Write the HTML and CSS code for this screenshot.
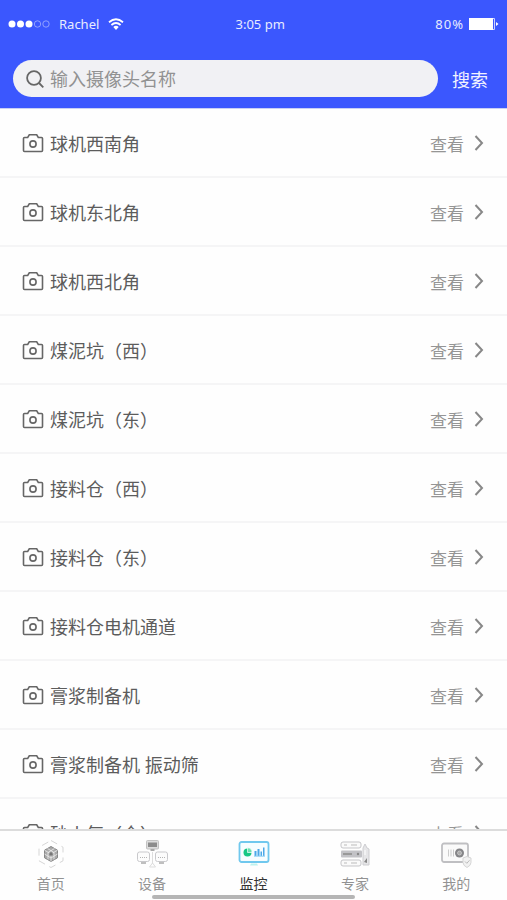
FILE: index.html
```html
<!DOCTYPE html>
<html lang="zh-CN">
<head>
<meta charset="utf-8">
<meta name="viewport" content="width=device-width, initial-scale=1">
<title>监控</title>
<link rel="stylesheet" href="styles.css">
</head>
<body>
<svg class="defs" aria-hidden="true">
  <symbol id="camera" viewBox="0 0 22 20"><path d="M2.5 4.500h3.200l1.600-2.700h7.400l1.600 2.700h3.200q1 0 1 1v12q0 1-1 1h-17q-1 0-1-1v-12q0-1 1-1z"/><circle cx="11" cy="11" r="3.100"/></symbol>
  <symbol id="chevron" viewBox="0 0 10 18"><path d="M1.500 2l6.500 7-6.500 7"/></symbol>
</svg>
<header class="header">
  <div class="status">
    <div class="carrier">
      <svg width="42" height="10" viewBox="0 0 42 10"><g fill="#fff"><circle cx="4" cy="5" r="3.500"/><circle cx="12.500" cy="5" r="3.500"/><circle cx="21" cy="5" r="3.500"/></g><g fill="none" stroke="#a5b1ff" stroke-width=".8"><circle cx="29.500" cy="5" r="3.200"/><circle cx="38" cy="5" r="3.200"/></g></svg>
      <span>Rachel</span>
      <svg width="16" height="12" viewBox="0 0 16 12"><g fill="none" stroke="#fff" stroke-width="1.800"><path d="M1 4.300q7-6 14 0"/><path d="M3.400 7q4.600-4 9.200 0"/></g><path d="M5.300 9q2.700-2.300 5.400 0L8 12z" fill="#fff"/></svg>
    </div>
    <time>3:05 pm</time>
    <div class="battery">
      <span>80%</span>
      <svg width="31" height="12" viewBox="0 0 31 12"><path d="M1 0h24v12H1z" fill="#fff"/><path d="M25 .5h1.500v11H25" fill="none" stroke="#cbd1ff"/><path d="M28 4l2.500 2L28 8z" fill="#fff"/></svg>
    </div>
  </div>
  <form class="search">
    <label class="field">
      <svg width="18" height="18" viewBox="0 0 18 18" fill="none" stroke="#666" stroke-width="1.800"><circle cx="8" cy="8" r="6.900"/><path d="M13 13l4.300 4.300"/></svg>
      <input type="text" placeholder="输入摄像头名称" aria-label="输入摄像头名称">
    </label>
    <button type="button">搜索</button>
  </form>
</header>
<main class="list">
  <ul>
    <li><svg class="camera"><use href="#camera"/></svg><span>球机西南角</span><a href="#">查看<svg class="chevron"><use href="#chevron"/></svg></a></li>
    <li><svg class="camera"><use href="#camera"/></svg><span>球机东北角</span><a href="#">查看<svg class="chevron"><use href="#chevron"/></svg></a></li>
    <li><svg class="camera"><use href="#camera"/></svg><span>球机西北角</span><a href="#">查看<svg class="chevron"><use href="#chevron"/></svg></a></li>
    <li><svg class="camera"><use href="#camera"/></svg><span>煤泥坑（西）</span><a href="#">查看<svg class="chevron"><use href="#chevron"/></svg></a></li>
    <li><svg class="camera"><use href="#camera"/></svg><span>煤泥坑（东）</span><a href="#">查看<svg class="chevron"><use href="#chevron"/></svg></a></li>
    <li><svg class="camera"><use href="#camera"/></svg><span>接料仓（西）</span><a href="#">查看<svg class="chevron"><use href="#chevron"/></svg></a></li>
    <li><svg class="camera"><use href="#camera"/></svg><span>接料仓（东）</span><a href="#">查看<svg class="chevron"><use href="#chevron"/></svg></a></li>
    <li><svg class="camera"><use href="#camera"/></svg><span>接料仓电机通道</span><a href="#">查看<svg class="chevron"><use href="#chevron"/></svg></a></li>
    <li><svg class="camera"><use href="#camera"/></svg><span>膏浆制备机</span><a href="#">查看<svg class="chevron"><use href="#chevron"/></svg></a></li>
    <li><svg class="camera"><use href="#camera"/></svg><span>膏浆制备机 振动筛</span><a href="#">查看<svg class="chevron"><use href="#chevron"/></svg></a></li>
    <li><svg class="camera"><use href="#camera"/></svg><span>砂火每（仓）</span><a href="#">查看<svg class="chevron"><use href="#chevron"/></svg></a></li>
  </ul>
</main>
<nav class="tabs">
  <a href="#">
    <svg viewBox="0 0 34 30" fill="none"><path d="M17 1.500l12 6.700v13.600l-12 6.700-12-6.700V8.200z" stroke="#d6d6d6" stroke-dasharray="7 5"/><path d="M17 7.500l6.500 3.700v7.600L17 22.500l-6.500-3.700v-7.600z" fill="#aaa" stroke="#858585" stroke-linejoin="round"/><path d="M10.500 11.200L17 15l6.500-3.800M17 15v7.500M13.500 9.500l6.500 4v7M20.500 9.500l-6.500 4v7M10.500 15l6.500 4 6.500-4" stroke="#ececec" stroke-width=".8"/><circle cx="17" cy="15" r="1.800" fill="#777"/></svg>
    <span>首页</span>
  </a>
  <a href="#">
    <svg viewBox="0 0 34 30" fill="none"><rect x="11.500" y="1.500" width="12" height="8.500" rx="1" fill="#ddd" stroke="#c2c2c2"/><path d="M13 3.500h9v4.500h-9z" fill="#8c8c8c"/><path d="M15.500 11h4" stroke="#aaa" stroke-width="2"/><g fill="#fcfcfc" stroke="#c9c9cc"><rect x="2.500" y="13" width="12" height="9.500" rx="2"/><rect x="20.500" y="13" width="12" height="9.500" rx="2"/></g><path d="M5 18.500h7M23 18.500h7" stroke="#b5b5b5" stroke-dasharray="1 1"/><path d="M6 24h5M24 24h5" stroke="#aaa" stroke-width="1.500"/><path d="M17.500 13v12M14.500 28l3-4 3 4z" stroke="#ddd"/></svg>
    <span>设备</span>
  </a>
  <a href="#" class="active" aria-current="page">
    <svg viewBox="0 0 34 30" fill="none"><rect x="2.500" y="3" width="29" height="20" rx="2" fill="#f6fdff" stroke="#70c8ee" stroke-width="1.800"/><path d="M14 24.500h6l1 2h-8z" fill="#bdf2ee"/><circle cx="10.500" cy="13.500" r="4" fill="#16c784"/><path d="M10.500 13.500V8.800q4.500.2 4.500 4.700z" fill="#6be0b0" stroke="#f6fdff" stroke-width=".7"/><path d="M17.500 12h2v5h-2zM20.500 10h2v7h-2zM23.500 12.500h1.500V17h-1.500zM26 8.500h1.500V17H26z" fill="#4ba8e8"/><path d="M17 17.200h11" stroke="#8fd0f4"/></svg>
    <span>监控</span>
  </a>
  <a href="#">
    <svg viewBox="0 0 34 30" fill="none"><g fill="#fafafa" stroke="#c5c5c8"><rect x="3" y="3" width="20" height="6" rx="2"/><rect x="3" y="21" width="20" height="6" rx="2"/></g><rect x="3" y="11.500" width="21" height="7" rx="1" fill="#c2c2c6"/><path d="M5 15h9" stroke="#999" stroke-width="2"/><circle cx="20" cy="15" r="1.200" fill="#888"/><path d="M13 6h6M13 24h6M6 6h3M6 24h3" stroke="#bbb"/><path d="M25 26V9l2-4 2 4 2 1v16z" fill="#e6e6e8" stroke="#cdcdd0"/><path d="M26 23l3-4v5z" fill="#888"/><path d="M27 11v5" stroke="#fff"/></svg>
    <span>专家</span>
  </a>
  <a href="#">
    <svg viewBox="0 0 34 30" fill="none"><rect x="3" y="4.500" width="26" height="18.500" rx="2" fill="#fafafa" stroke="#bfbfc2" stroke-width="1.800"/><path d="M9.500 10.500v7M12 10.500v7M14.500 10.500v7" stroke="#ccc"/><circle cx="20.500" cy="14" r="4.500" fill="#858588"/><circle cx="20.500" cy="14" r="2" fill="#aaa" stroke="#ddd" stroke-width=".6"/><path d="M28 17.500l4 1.500v4.500q0 3-4 5-4-2-4-5V19z" fill="#f1f1f1" stroke="#d5d5d5"/><path d="M26 22.500l1.800 1.800 2.700-3" stroke="#bbb"/></svg>
    <span>我的</span>
  </a>
  <div class="home-indicator"></div>
</nav>
</body>
</html>
```
FILE: styles.css
```css
* {
  box-sizing: border-box;
}

body {
  display: flex;
  flex-direction: column;
  height: 100vh;
  margin: 0;
  background: #fefefe;
  color: #5c5c5c;
  font-family: "Noto Sans", "Noto Sans CJK SC", sans-serif;
}

svg {
  flex: none;
}

a {
  color: inherit;
  text-decoration: none;
}

.defs {
  position: absolute;
  width: 0;
  height: 0;
}

.header {
  flex: none;
  padding-bottom: 11px;
  border-bottom: 1px solid #c9d0f4;
  background: #3b57fe;
  background-clip: padding-box;
  color: #fff;
}

.status {
  display: grid;
  grid-template-columns: 17fr auto 16fr;
  align-items: center;
  height: 60px;
  padding: 0 8px 12px;
  color: #e8ebff;
  font-size: 13px;
}

.carrier,
.battery {
  display: flex;
  align-items: center;
  gap: 9px;
}

.battery {
  justify-content: flex-end;
  gap: 4px;
  letter-spacing: 1px;
}

.search {
  display: flex;
  align-items: center;
  gap: 14px;
  margin: 0;
  padding: 0 19px 0 13px;
}

.field {
  display: flex;
  flex: 1;
  align-items: center;
  gap: 6px;
  height: 37px;
  min-width: 0;
  padding: 0 13px;
  border-radius: 19px;
  background: #f1f1f4;
}

.field input {
  flex: 1;
  min-width: 0;
  padding: 0;
  border: 0;
  outline: 0;
  background: transparent;
  color: #555;
  font: inherit;
  font-size: 18px;
}

.field input::placeholder {
  color: #929292;
  opacity: 1;
}

.search button {
  padding: 0;
  border: 0;
  background: none;
  color: #f1f3ff;
  font: inherit;
  font-size: 18px;
}

.list {
  flex: 1;
  min-height: 0;
  overflow: hidden;
}

.list ul {
  margin: 0;
  padding: 0;
  list-style: none;
}

.list li {
  display: flex;
  align-items: center;
  gap: 6px;
  height: 69px;
  padding: 1px 23px 0 22px;
  border-bottom: 2px solid #f5f5f6;
  font-size: 18px;
}

.list span {
  flex: 1;
}

.list a {
  display: flex;
  align-items: center;
  gap: 10px;
  color: #959595;
  font-size: 17px;
}

.camera {
  width: 22px;
  height: 20px;
  fill: none;
  stroke: #666;
  stroke-width: 1.6;
}

.chevron {
  width: 10px;
  height: 18px;
  fill: none;
  stroke: #888;
  stroke-width: 2;
}

.tabs {
  position: relative;
  display: flex;
  flex: none;
  height: 71px;
  border-top: 2px solid #dcdcdc;
  background: #fefefe;
}

.tabs a {
  display: flex;
  flex: 1;
  flex-direction: column;
  align-items: center;
  padding-top: 8px;
  color: #929292;
  font-size: 14px;
  line-height: 30px;
}

.tabs svg {
  width: 34px;
  height: 30px;
}

.tabs .active {
  color: #333;
}

.home-indicator {
  position: absolute;
  bottom: 1px;
  left: 30%;
  width: 40%;
  height: 4px;
  border-radius: 2px;
  background: #b5b5b5;
}
```
